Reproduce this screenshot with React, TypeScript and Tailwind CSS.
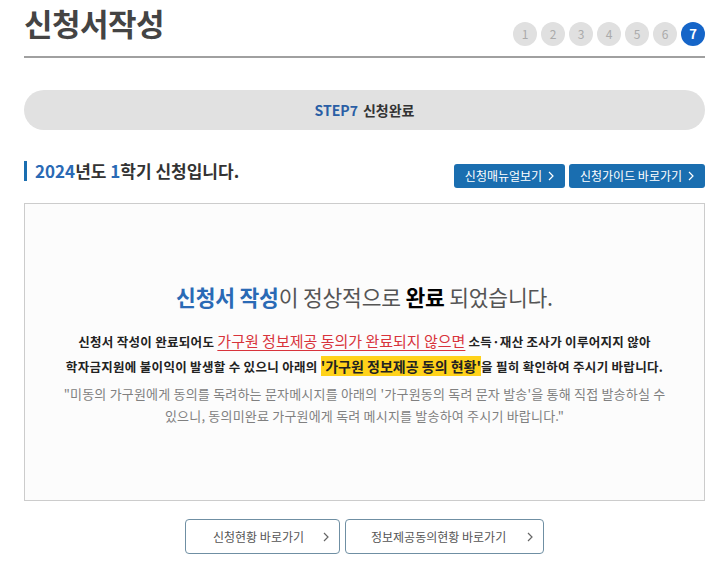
import React from "react";

const font = { fontFamily: '"Noto Sans CJK KR", "Noto Sans", sans-serif' };

function Chevron({ className }: { className?: string }) {
  return (
    <svg className={className} width="6" height="10" viewBox="0 0 6 10" fill="none">
      <path d="M1 1l4 4-4 4" stroke="currentColor" strokeWidth="1.2" />
    </svg>
  );
}

export default function App() {
  const steps = [1, 2, 3, 4, 5, 6, 7];
  return (
    <div className="bg-white w-[719px] h-[562px] overflow-hidden" style={font}>
      <div className="ml-[24px] w-[681px]">
        {/* header */}
        <div className="flex items-end justify-between border-b-2 border-[#a0a0a0] pb-[10px]">
          <h1 className="text-[31px] leading-[46px] font-bold text-[#444] tracking-[-0.5px]">신청서작성</h1>
          <div className="flex gap-[4px]">
            {steps.map((s) =>
              s === 7 ? (
                <div key={s} className="w-[24px] h-[24px] rounded-full bg-[#1565c8] text-white text-[13px] font-bold flex items-center justify-center">
                  {s}
                </div>
              ) : (
                <div key={s} className="w-[24px] h-[24px] rounded-full bg-[#e0e0e0] text-[#aaa] text-[12px] flex items-center justify-center">
                  {s}
                </div>
              )
            )}
          </div>
        </div>

        {/* step bar */}
        <div className="mt-[32px] h-[40px] rounded-full bg-[#e1e1e1] flex items-center justify-center text-[14px] font-bold">
          <span className="text-[#2a5ea5]">STEP7</span>
          <span className="ml-[5px] text-[#333]">신청완료</span>
        </div>

        {/* section head */}
        <div className="mt-[30px] flex items-end justify-between">
          <div className="flex items-center mb-[6px]">
            <div className="w-[3px] h-[20px] bg-[#1a6eb0]" />
            <div className="ml-[8px] text-[17px] leading-[22px] font-bold text-[#333]">
              <span className="text-[#2a6ab5]">2024</span>년도 <span className="text-[#2a6ab5]">1</span>학기 신청입니다.
            </div>
          </div>
          <div className="flex gap-[4px]">
            <div className="h-[24px] w-[111px] rounded-[3px] bg-[#1a6eb0] text-white text-[12px] flex items-center justify-center gap-[6px]">
              신청매뉴얼보기 <Chevron />
            </div>
            <div className="h-[24px] w-[136px] rounded-[3px] bg-[#1a6eb0] text-white text-[12px] flex items-center justify-center gap-[6px]">
              신청가이드 바로가기 <Chevron />
            </div>
          </div>
        </div>

        {/* box */}
        <div className="mt-[15px] h-[298px] border border-[#cccccc] bg-[#fcfcfc] flex flex-col items-center pt-[79px]">
          <div className="text-[21.5px] leading-[28px] text-[#555] tracking-[-0.2px]">
            <span className="text-[#2a6ab5] font-bold">신청서 작성</span>이 정상적으로 <span className="text-black font-bold">완료</span> 되었습니다.
          </div>
          <div className="mt-[17px] text-center text-[12.5px] tracking-[0.3px] font-bold text-[#222] leading-[25px] whitespace-nowrap">
            <div>
              신청서 작성이 완료되어도{" "}
              <span className="text-[15px] tracking-normal font-normal text-[#d8333b] underline underline-offset-[3px]">가구원 정보제공 동의가 완료되지 않으면</span>{" "}
              소득·재산 조사가 이루어지지 않아
            </div>
            <div>
              학자금지원에 불이익이 발생할 수 있으니 아래의{" "}
              <span className="text-[14px] tracking-normal bg-[#ffd21a]">'가구원 정보제공 동의 현황'</span>을 필히 확인하여 주시기 바랍니다.
            </div>
          </div>
          <div className="mt-[4px] text-center text-[13px] tracking-[0.2px] text-[#808080] leading-[22px] whitespace-nowrap">
            <div>"미동의 가구원에게 동의를 독려하는 문자메시지를 아래의 '가구원동의 독려 문자 발송'을 통해 직접 발송하실 수</div>
            <div>있으니, 동의미완료 가구원에게 독려 메시지를 발송하여 주시기 바랍니다."</div>
          </div>
        </div>

        {/* bottom buttons */}
        <div className="mt-[18px] flex justify-center gap-[5px]">
          <div className="h-[35px] w-[155px] rounded-[4px] border border-[#6f8fa3] bg-white flex items-center justify-between pl-[27px] pr-[10px] text-[12px] text-[#555]">
            <span>신청현황 바로가기</span>
            <Chevron className="text-[#666]" />
          </div>
          <div className="h-[35px] w-[199px] rounded-[4px] border border-[#6f8fa3] bg-white flex items-center justify-between pl-[25px] pr-[10px] text-[12px] text-[#555]">
            <span>정보제공동의현황 바로가기</span>
            <Chevron className="text-[#666]" />
          </div>
        </div>
      </div>
    </div>
  );
}
